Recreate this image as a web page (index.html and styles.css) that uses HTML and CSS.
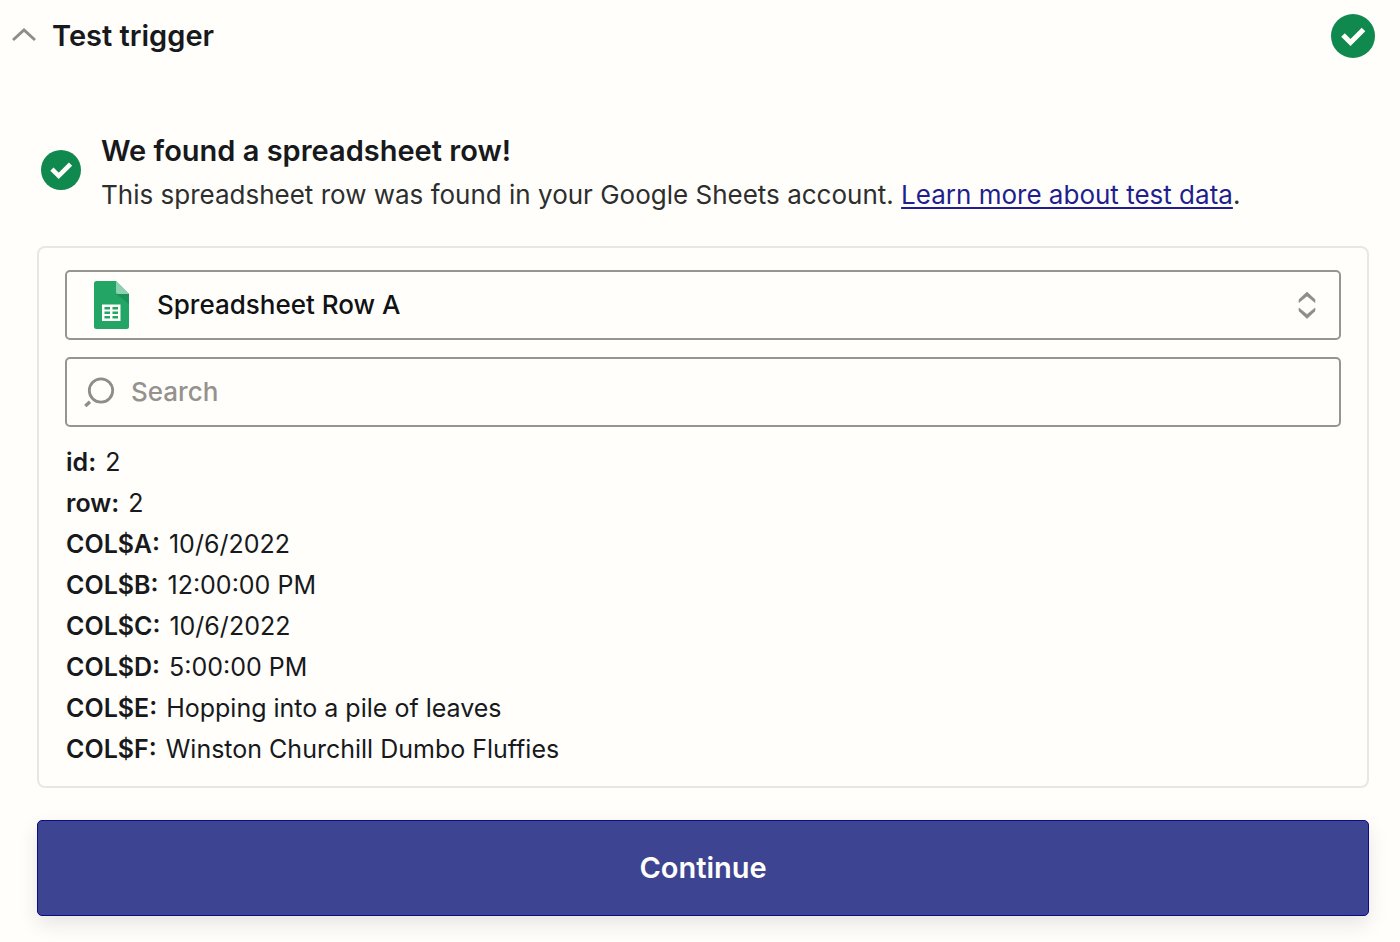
FILE: index.html
```html
<!DOCTYPE html>
<html lang="en">
<head>
<meta charset="utf-8">
<title>Test trigger</title>
<link rel="stylesheet" href="styles.css">
</head>
<body>
<main class="step">
  <header class="step-header">
    <button class="toggle" type="button" aria-expanded="true">
      <svg class="toggle-icon" viewBox="0 0 24 16" aria-hidden="true"><path d="M1 12 12 2 23 12" fill="none" stroke="#8f8d8a" stroke-width="3"/></svg>
      <span>Test trigger</span>
    </button>
    <svg class="status-large" viewBox="0 0 44 44" role="img" aria-label="Complete"><circle cx="22" cy="22" r="22" fill="#10894e"/><path d="M12 21 19.500 28.500 32.500 15.500" fill="none" stroke="#fffefb" stroke-width="5"/></svg>
  </header>

  <section class="content">
    <div class="result">
      <svg class="status" viewBox="0 0 44 44" role="img" aria-label="Success"><circle cx="22" cy="22" r="22" fill="#10894e"/><path d="M12 21 19.500 28.500 32.500 15.500" fill="none" stroke="#fffefb" stroke-width="5"/></svg>
      <div>
        <h1 class="result-title">We found a spreadsheet row!</h1>
        <p class="result-text">This spreadsheet row was found in your Google Sheets account. <a class="link" href="#">Learn more about test data</a>.</p>
      </div>
    </div>

    <div class="panel">
      <div class="fields">
        <label class="field field-select">
          <svg class="sheet-icon" viewBox="0 0 36 48" aria-hidden="true">
            <path d="M2.500 0H22L35 13V45.500Q35 48 32.500 48H2.500Q0 48 0 45.500V2.500Q0 0 2.500 0Z" fill="#23a566"/>
            <path d="M22 13H35V23Z" fill="#1c9258"/>
            <path d="M22 0 35 13H24Q22 13 22 11Z" fill="#8ed1b1"/>
            <path d="M8 23.500H26.500V40H8Z" fill="#fffefb"/>
            <path d="M10.500 26H16V28.500H10.500ZM18.500 26H24V28.500H18.500ZM10.500 30.500H16V33H10.500ZM18.500 30.500H24V33H18.500ZM10.500 35H16V37.500H10.500ZM18.500 35H24V37.500H18.500Z" fill="#23a566"/>
          </svg>
          <select class="control" aria-label="Spreadsheet row"><option>Spreadsheet Row A</option></select>
          <svg class="sort-icon" viewBox="0 0 18 28" aria-hidden="true"><path d="M1 8.500 9 1 17 8.500V11.500L9 5 1 11.500ZM1 17 9 23.500 17 17V20L9 27.500 1 20Z" fill="#8f8d8a" stroke="#8f8d8a" stroke-width=".6"/></svg>
        </label>
        <label class="field field-search">
          <svg class="search-icon" viewBox="0 0 32 32" aria-hidden="true"><circle cx="18" cy="14.500" r="11.700" fill="none" stroke="#8f8d8a" stroke-width="2.800"/><path d="M2.300 30 7 25.800" stroke="#8f8d8a" stroke-width="3.400"/></svg>
          <input class="control" type="search" placeholder="Search" aria-label="Search">
        </label>
      </div>
      <dl class="data">
        <div class="row"><dt>id:</dt><dd>2</dd></div>
        <div class="row"><dt>row:</dt><dd>2</dd></div>
        <div class="row"><dt>COL$A:</dt><dd>10/6/2022</dd></div>
        <div class="row"><dt>COL$B:</dt><dd>12:00:00 PM</dd></div>
        <div class="row"><dt>COL$C:</dt><dd>10/6/2022</dd></div>
        <div class="row"><dt>COL$D:</dt><dd>5:00:00 PM</dd></div>
        <div class="row"><dt>COL$E:</dt><dd>Hopping into a pile of leaves</dd></div>
        <div class="row"><dt>COL$F:</dt><dd>Winston Churchill Dumbo Fluffies</dd></div>
      </dl>
    </div>

    <button class="continue" type="button">Continue</button>
  </section>
</main>
</body>
</html>
```
FILE: styles.css
```css
* {
  box-sizing: border-box;
}

body {
  margin: 0;
  background: #fffefb;
  color: #17191c;
  font-family: Inter, "Liberation Sans", sans-serif;
  font-size: 26px;
}

.step-header {
  display: flex;
  align-items: center;
  justify-content: space-between;
  padding: 14px 25px 0 12px;
}

.toggle {
  display: flex;
  align-items: center;
  gap: 16px;
  padding: 0;
  border: 0;
  background: none;
  color: inherit;
  font-family: inherit;
  font-size: 29px;
  font-weight: 600;
  line-height: 44px;
}

.toggle-icon {
  width: 24px;
  height: 16px;
}

.status-large {
  width: 44px;
  height: 44px;
}

.content {
  padding: 71px 31px 24px 37px;
}

.result {
  display: flex;
  align-items: flex-start;
  gap: 20px;
  padding-left: 4px;
}

.status {
  flex: none;
  width: 40px;
  height: 40px;
  margin-top: 21px;
}

.result-title {
  margin: 0;
  font-size: 29px;
  font-weight: 600;
  line-height: 44px;
}

.result-text {
  margin: 0;
  color: #2d2e2e;
  line-height: 44px;
}

.link {
  color: #1f1f8f;
  text-decoration-thickness: 2px;
  text-underline-offset: 3px;
}

.panel {
  margin-top: 29px;
  padding: 22px 26px 16px;
  border: 2px solid #e8e7e4;
  border-radius: 8px;
}

.fields {
  display: flex;
  flex-direction: column;
  gap: 17px;
}

.field {
  display: flex;
  align-items: center;
  height: 70px;
  border: 2px solid #979592;
  border-radius: 5px;
}

.field-select {
  gap: 27px;
  padding: 0 23px 0 27px;
}

.field-search {
  gap: 16px;
  padding: 0 16px;
}

.sheet-icon {
  flex: none;
  width: 36px;
  height: 48px;
}

.sort-icon {
  flex: none;
  width: 18px;
  height: 28px;
}

.search-icon {
  flex: none;
  width: 32px;
  height: 32px;
}

.control {
  flex: 1;
  min-width: 0;
  padding: 0;
  border: 0;
  outline: 0;
  appearance: none;
  background: none;
  color: #101214;
  font-family: inherit;
  font-size: 26px;
  font-weight: 500;
  line-height: 40px;
}

.control::placeholder {
  color: #95928e;
}

.data {
  margin: 15px 0 0;
  padding: 0 1px;
  font-size: 25px;
}

.row {
  display: flex;
  align-items: baseline;
  gap: 9px;
  line-height: 41px;
}

.row dt {
  font-weight: 600;
}

.row dd {
  margin: 0;
}

.continue {
  display: block;
  width: 100%;
  height: 96px;
  margin-top: 32px;
  border: 1px solid #0b0b84;
  border-radius: 5px;
  background: #3d4592;
  box-shadow: 0 8px 20px rgba(0, 0, 0, 0.1);
  color: #fffefb;
  font-family: inherit;
  font-size: 29px;
  font-weight: 600;
  line-height: 40px;
}
```
